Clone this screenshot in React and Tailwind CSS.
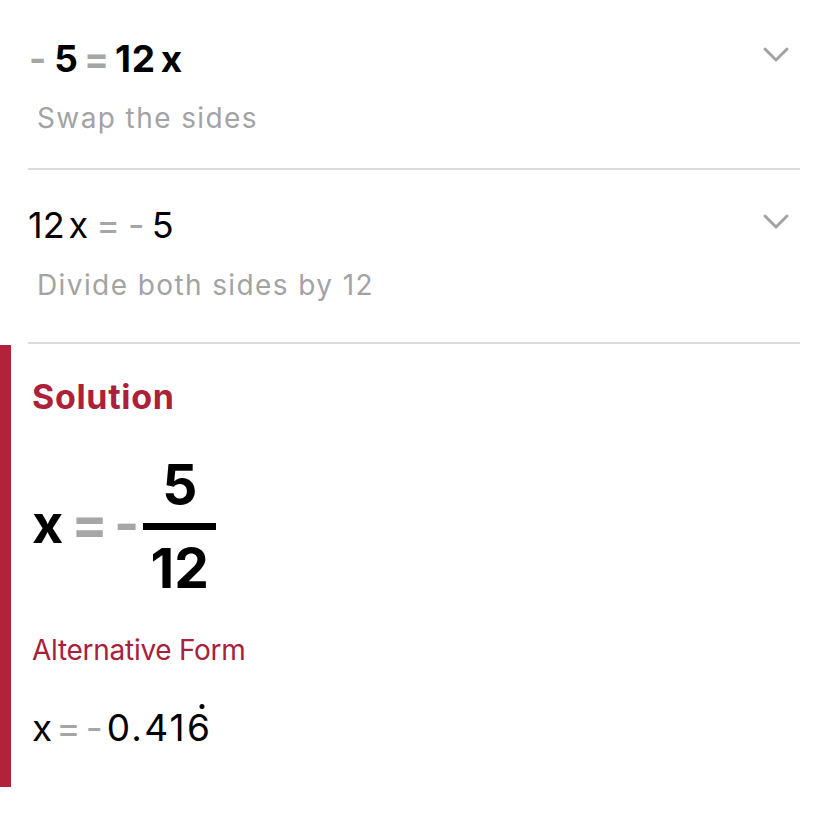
import React from 'react'

const font = { fontFamily: 'Inter, "Liberation Sans", sans-serif' }

function Chevron() {
  return (
    <svg width="28" height="18" viewBox="0 0 28 18" className="text-[#a2a2a2]">
      <polyline points="3,3 14,14 25,3" fill="none" stroke="currentColor" strokeWidth="3" strokeLinecap="round" strokeLinejoin="round" />
    </svg>
  )
}

function Op({ children, className = '' }) {
  return <span className={`text-[#a6a6a6] ${className}`}>{children}</span>
}

export default function App() {
  return (
    <div className="w-[828px] h-[828px] bg-white overflow-hidden" style={font}>
      <div className="px-[28px]">
        {/* step 1 */}
        <div className="pt-[40px] pb-[36px] border-b-2 border-[#dcdcdc]">
          <div className="flex items-start justify-between">
            <div className="flex items-center text-[37px] leading-none font-bold text-black">
              <Op className="ml-[1px] mr-[8px]">-</Op>
              <span>5</span>
              <Op className="mx-[6px]">=</Op>
              <span className="tracking-[0.02em]">12</span>
              <span className="ml-[5px]">x</span>
            </div>
            <div className="mt-[6px] mr-[10px]">
              <Chevron />
            </div>
          </div>
          <div className="mt-[27px] ml-[9px] text-[28px] leading-none tracking-[0.05em] text-[#a3a3a3]">
            Swap the sides
          </div>
        </div>

        {/* step 2 */}
        <div className="pt-[37px] pb-[43px] border-b-2 border-[#dcdcdc]">
          <div className="flex items-start justify-between">
            <div className="flex items-center text-[36px] leading-none text-black">
              <span>12</span>
              <span className="ml-[4px]">x</span>
              <Op className="mx-[8px]">=</Op>
              <Op className="mr-[7px]">-</Op>
              <span>5</span>
            </div>
            <div className="mt-[6px] mr-[10px]">
              <Chevron />
            </div>
          </div>
          <div className="mt-[28px] ml-[9px] text-[28px] leading-none tracking-[0.05em] text-[#a3a3a3]">
            Divide both sides by 12
          </div>
        </div>
      </div>

      {/* solution */}
      <div className="flex mt-[1px]">
        <div className="w-[11px] h-[442px] bg-[#b3213a]" />
        <div className="pl-[21px] pt-[35px]">
          <div className="text-[34px] leading-none font-bold tracking-[0.02em] text-[#ac2139]">Solution</div>

          <div className="mt-[43px] flex items-center font-bold text-black">
            <span className="text-[54px] leading-none mb-[6px]">x</span>
            <Op className="text-[54px] leading-none ml-[8px] mb-[6px]">=</Op>
            <Op className="text-[54px] leading-none ml-[6px] mb-[6px]">-</Op>
            <div className="ml-[4px] flex flex-col items-stretch">
              <div className="text-[55px] leading-none text-center">5</div>
              <div className="h-[7px] bg-black my-[11px] w-[73px]" />
              <div className="text-[55px] leading-none text-center">12</div>
            </div>
          </div>

          <div className="mt-[40px] text-[28px] leading-none tracking-[-0.01em] text-[#a8213b]">Alternative Form</div>

          <div className="mt-[45px] flex items-center text-[37px] leading-none text-black">
            <span>x</span>
            <Op className="ml-[4px] mr-[5px]">=</Op>
            <Op className="mr-[4px]">-</Op>
            <span className="tracking-[0.06em]">0.41</span>
            <span className="relative">
              6
              <span className="absolute left-[68%] -translate-x-1/2 -top-[5px] w-[5px] h-[5px] rounded-full bg-black" />
            </span>
          </div>
        </div>
      </div>
    </div>
  )
}
